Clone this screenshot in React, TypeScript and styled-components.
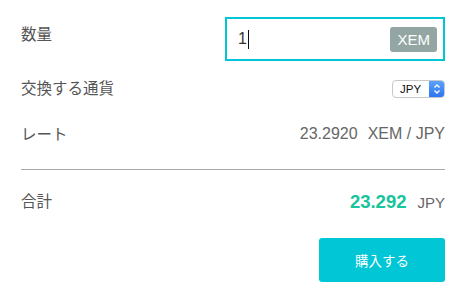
import { FunctionComponent } from 'react';
import styled, { createGlobalStyle } from 'styled-components';

const GlobalStyle = createGlobalStyle`
  body {
    margin: 0;
    background: #fff;
    font-family: 'Liberation Sans', 'Noto Sans CJK JP', sans-serif;
  }
`;

const Panel = styled.div`
  width: 468px;
  height: 295px;
  box-sizing: border-box;
  padding: 17px 23px 0 21px;
  display: flex;
  flex-direction: column;
`;

const Row = styled.div<{ height: number; gap?: number }>`
  display: flex;
  align-items: center;
  justify-content: space-between;
  height: ${({ height }) => height}px;
  margin-bottom: ${({ gap }) => gap || 0}px;
`;

const Label = styled.span<{ lift?: number }>`
  font-family: 'Noto Sans CJK JP', sans-serif;
  font-size: 15.5px;
  color: #555;
  margin-bottom: ${({ lift }) => lift || 0}px;
`;

const AmountBox = styled.div`
  width: 220px;
  height: 44px;
  box-sizing: border-box;
  border: 2px solid #00c6d6;
  display: flex;
  align-items: center;
  justify-content: space-between;
  padding: 0 6px 0 11px;
`;

const AmountValue = styled.span`
  font-size: 16px;
  color: #333;
  display: flex;
  align-items: center;

  &::after {
    content: '';
    width: 1px;
    height: 19px;
    background: #111;
    margin-left: 1px;
  }
`;

const Unit = styled.span`
  background: #93a6a4;
  color: #fff;
  font-size: 15px;
  border-radius: 3px;
  padding: 0 7px;
  height: 25px;
  line-height: 25px;
`;

const Select = styled.div`
  width: 53px;
  height: 18px;
  box-sizing: border-box;
  border: 1px solid #c8c8c8;
  border-radius: 4px;
  display: flex;
  overflow: hidden;
  background: #fff;
`;

const SelectText = styled.span`
  flex: 1;
  font-size: 11.5px;
  color: #111;
  padding-left: 7px;
  line-height: 16px;
`;

const SelectArrows = styled.span`
  width: 15px;
  background: linear-gradient(#5aa2fb, #2d74f2);
  display: flex;
  align-items: center;
  justify-content: center;
`;

const Rate = styled.span`
  display: flex;
  align-items: baseline;
  gap: 10px;
  font-size: 16px;
  color: #666;
`;

const Divider = styled.div`
  height: 1px;
  background: #aaa;
  margin-bottom: 14px;
`;

const Total = styled.span`
  display: flex;
  align-items: baseline;
  gap: 11px;
`;

const TotalValue = styled.span`
  font-size: 18.5px;
  font-weight: bold;
  color: #17c49c;
`;

const TotalUnit = styled.span`
  font-size: 15px;
  color: #666;
`;

const Actions = styled.div`
  display: flex;
  justify-content: flex-end;
`;

const BuyButton = styled.button`
  width: 126px;
  height: 44px;
  border: none;
  border-radius: 3px;
  background: #00c6d6;
  color: #fff;
  font-family: 'Noto Sans CJK JP', sans-serif;
  font-size: 13.5px;
`;

const App: FunctionComponent = () => (
  <>
    <GlobalStyle />
    <Panel>
      <Row height={44} gap={10}>
        <Label lift={12}>数量</Label>
        <AmountBox>
          <AmountValue>1</AmountValue>
          <Unit>XEM</Unit>
        </AmountBox>
      </Row>
      <Row height={36} gap={9}>
        <Label lift={4}>交換する通貨</Label>
        <Select>
          <SelectText>JPY</SelectText>
          <SelectArrows>
            <svg width="8" height="12" viewBox="0 0 8 12" fill="none" stroke="#fff" strokeWidth="1.3">
              <path d="M1.5 4.5 L4 2 L6.5 4.5" />
              <path d="M1.5 7.5 L4 10 L6.5 7.5" />
            </svg>
          </SelectArrows>
        </Select>
      </Row>
      <Row height={36} gap={17}>
        <Label lift={2}>レート</Label>
        <Rate>
          <span>23.2920</span>
          <span>XEM / JPY</span>
        </Rate>
      </Row>
      <Divider />
      <Row height={36} gap={18}>
        <Label lift={4}>合計</Label>
        <Total>
          <TotalValue>23.292</TotalValue>
          <TotalUnit>JPY</TotalUnit>
        </Total>
      </Row>
      <Actions>
        <BuyButton>購入する</BuyButton>
      </Actions>
    </Panel>
  </>
);

export default App;
